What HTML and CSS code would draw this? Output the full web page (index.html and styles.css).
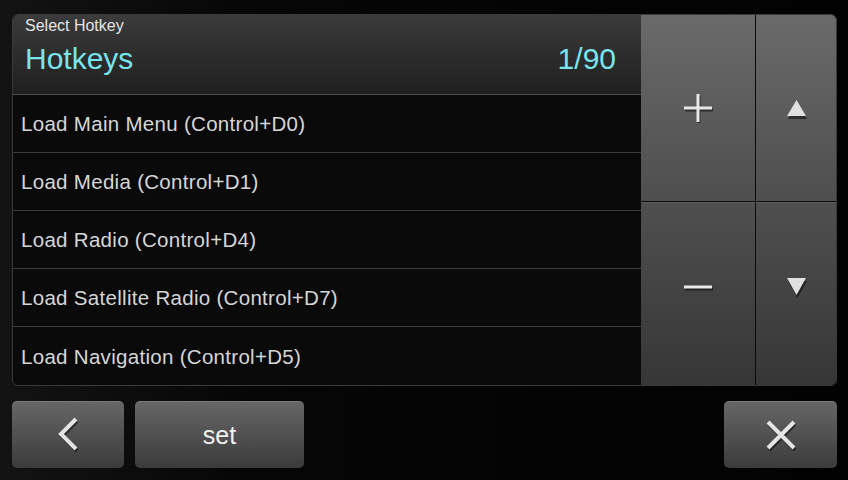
FILE: index.html
```html
<!DOCTYPE html>
<html lang="en">

<head>
    <meta charset="UTF-8">
    <meta name="viewport" content="width=device-width, initial-scale=1.0">
    <title>Select Hotkey</title>
    <link rel="stylesheet" href="styles.css">
</head>

<body>
    <div id="screen">
        <section class="panel">
            <div class="list">
                <header class="list_head">
                    <div class="sub">Select Hotkey</div>
                    <div class="title_row">
                        <span>Hotkeys</span>
                        <span>1/90</span>
                    </div>
                </header>
                <ul class="rows">
                    <li>Load Main Menu (Control+D0)</li>
                    <li>Load Media (Control+D1)</li>
                    <li>Load Radio (Control+D4)</li>
                    <li>Load Satellite Radio (Control+D7)</li>
                    <li>Load Navigation (Control+D5)</li>
                </ul>
            </div>
            <div class="keys">
                <div class="key key_wide">
                    <svg width="30" height="30" viewBox="0 0 30 30">
                        <path d="M1 15H29M15 1V29" stroke="#000" stroke-opacity=".5" stroke-width="3" transform="translate(1 2)" />
                        <path d="M1 15H29M15 1V29" stroke="#e8e8e8" stroke-width="3" />
                    </svg>
                </div>
                <div class="key key_tr">
                    <svg width="21" height="20" viewBox="0 0 21 20">
                        <polygon points="10.5,1 20,17 1,17" fill="#000" fill-opacity=".5" transform="translate(1 2)" />
                        <polygon points="10.5,0 20,16 1,16" fill="#e0e0e0" />
                    </svg>
                </div>
                <div class="key key_wide key_low">
                    <svg width="30" height="8" viewBox="0 0 30 8">
                        <path d="M1 3H29" stroke="#000" stroke-opacity=".5" stroke-width="3" transform="translate(1 2)" />
                        <path d="M1 3H29" stroke="#e8e8e8" stroke-width="3" />
                    </svg>
                </div>
                <div class="key key_low">
                    <svg width="21" height="20" viewBox="0 0 21 20">
                        <polygon points="1,1 20,1 10.5,18" fill="#000" fill-opacity=".5" transform="translate(1 2)" />
                        <polygon points="1,0 20,0 10.5,17" fill="#e0e0e0" />
                    </svg>
                </div>
            </div>
        </section>
        <footer class="bar">
            <div class="btn btn_back">
                <svg width="24" height="38" viewBox="0 0 24 38">
                    <path d="M20 3L5 18L20 33" fill="none" stroke="#000" stroke-opacity=".5" stroke-width="4" transform="translate(1 2)" />
                    <path d="M20 3L5 18L20 33" fill="none" stroke="#e4e4e4" stroke-width="4" />
                </svg>
            </div>
            <div class="btn btn_set">set</div>
            <div class="btn btn_close">
                <svg width="34" height="34" viewBox="0 0 34 34">
                    <path d="M4 4L30 30M30 4L4 30" stroke="#000" stroke-opacity=".5" stroke-width="4" transform="translate(1 2)" />
                    <path d="M4 4L30 30M30 4L4 30" stroke="#e4e4e4" stroke-width="4" />
                </svg>
            </div>
        </footer>
    </div>
</body>

</html>
```

FILE: styles.css
```css
* {
    margin: 0;
    padding: 0;
    box-sizing: border-box;
}

ul,
li {
    list-style: none;
}

body {
    width: 848px;
    height: 480px;
    overflow: hidden;
    background: #000;
    font-family: "Liberation Sans", Arial, sans-serif;
}

#screen {
    width: 848px;
    height: 480px;
    padding: 14px 11px 12px 12px;
    background: linear-gradient(90deg, #131313 0%, #060606 30%, #020202 100%);
    display: flex;
    flex-direction: column;
}

.panel {
    height: 373px;
    display: flex;
    border: 1px solid #3a3a3a;
    border-radius: 6px;
    overflow: hidden;
}

.list {
    width: 628px;
    display: flex;
    flex-direction: column;
    background: #0a0a0a;
}

.list_head {
    height: 82px;
    padding: 1px 25px 0 12px;
    background: linear-gradient(#3b3b3b, #1f1f1f);
    border-bottom: 1px solid #4a4a4a;
}

.list_head .sub {
    color: #e4e4e4;
    font-size: 16px;
    line-height: 20px;
}

.list_head .title_row {
    display: flex;
    justify-content: space-between;
    align-items: center;
    height: 34px;
    margin-top: 6px;
    color: #79e4ec;
    font-size: 30px;
}

.rows {
    flex: 1;
    display: flex;
    flex-direction: column;
}

.rows li {
    height: 58px;
    display: flex;
    align-items: center;
    padding: 1px 0 0 8px;
    color: #d6d6d6;
    font-size: 20.5px;
    letter-spacing: 0.3px;
    border-bottom: 1px solid #3c3c3c;
}

.rows li:last-child {
    border-bottom: none;
}

.keys {
    flex: 1;
    display: grid;
    grid-template-columns: 114px 1fr;
    grid-template-rows: 186px 1fr;
    gap: 1px;
    background: #0a0a0a;
}

.key {
    display: flex;
    align-items: center;
    justify-content: center;
    background: linear-gradient(#6a6a6a, #4e4e4e);
}

.key_low {
    background: linear-gradient(#4f4f4f, #363636);
    border-top: 1px solid #5e5e5e;
}

.key_tr svg {
    margin-top: 3px;
}

.key_low svg {
    margin-bottom: 12px;
}

.bar {
    display: flex;
    margin-top: 15px;
    height: 67px;
}

.btn {
    display: flex;
    align-items: center;
    justify-content: center;
    border-radius: 5px;
    border-top: 1px solid #7c7c7c;
    background: linear-gradient(#666, #3b3b3b);
    color: #f0f0f0;
    font-size: 25px;
}

.btn_back {
    width: 112px;
}

.btn_set {
    width: 169px;
    margin-left: 11px;
}

.btn_close {
    width: 113px;
    margin-left: auto;
}
```
